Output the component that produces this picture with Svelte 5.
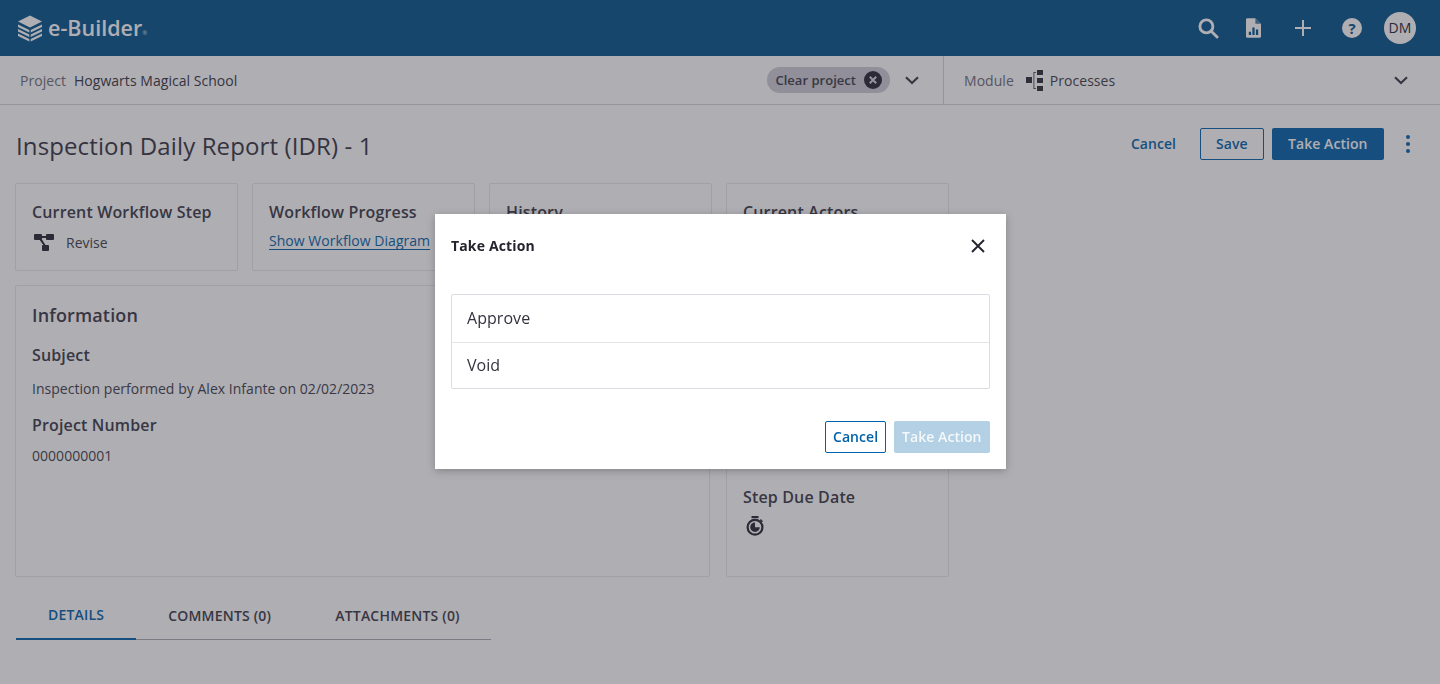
<script lang="ts">
  const cards = [
    { title: 'Current Workflow Step' },
    { title: 'Workflow Progress' },
    { title: 'History' },
    { title: 'Current Actors' },
  ];
  const tabs = ['DETAILS', 'COMMENTS (0)', 'ATTACHMENTS (0)'];
  const actions = ['Approve', 'Void'];
</script>

<div class="page">
  <header class="topbar">
    <div class="brand">
      <svg class="brand-mark" viewBox="0 0 26 27" fill="currentColor" aria-hidden="true">
        <path d="M13 0.5 25 6.5 13 12.5 1 6.5Z" />
        <path d="M1 9.5 12.3 15V17.6L1 12.1ZM25 9.5 13.7 15V17.6L25 12.1Z" />
        <path d="M1 14 12.3 19.5V22.1L1 16.6ZM25 14 13.7 19.5V22.1L25 16.6Z" />
        <path d="M1 18.5 12.3 24V26.6L1 21.1ZM25 18.5 13.7 24V26.6L25 21.1Z" />
      </svg>
      <span class="brand-name">e-Builder</span><span class="brand-reg">®</span>
    </div>
    <nav class="top-icons">
      <svg class="ic-search" viewBox="0 0 22 22" fill="none" stroke="currentColor" stroke-width="3" aria-hidden="true">
        <circle cx="8.8" cy="8.8" r="6.8" />
        <path d="M13.6 13.6 20 20" stroke-linecap="round" />
      </svg>
      <svg class="ic-report" viewBox="0 0 16 21" aria-hidden="true">
        <path d="M1.5 0H10L16 6V19.5A1.5 1.5 0 0 1 14.5 21H1.5A1.5 1.5 0 0 1 0 19.5V1.5A1.5 1.5 0 0 1 1.5 0Z" fill="currentColor" />
        <path d="M10 0V6H16" fill="#005289" fill-opacity="0.75" />
        <path d="M3 14.5H5.4V18H3ZM6.8 10H9.2V18H6.8ZM10.6 12H13V18H10.6Z" fill="#005289" />
      </svg>
      <svg class="ic-plus" viewBox="0 0 16 16" fill="none" stroke="currentColor" stroke-width="2" aria-hidden="true">
        <path d="M8 0V16M0 8H16" />
      </svg>
      <span class="ic-help">?</span>
      <span class="avatar">DM</span>
    </nav>
  </header>

  <div class="context">
    <div class="ctx-project">
      <span class="ctx-label">Project</span>
      <span class="ctx-value">Hogwarts Magical School</span>
      <span class="chip">
        Clear project
        <svg viewBox="0 0 18 18" aria-hidden="true">
          <circle cx="9" cy="9" r="9" fill="#24242f" />
          <path d="M5.8 5.8 12.2 12.2M12.2 5.8 5.8 12.2" stroke="#d4d4dd" stroke-width="2" />
        </svg>
      </span>
      <svg class="chevron" viewBox="0 0 14 9" fill="none" stroke="currentColor" stroke-width="2.2" aria-hidden="true">
        <path d="M1 1.2 7 7 13 1.2" />
      </svg>
    </div>
    <div class="ctx-module">
      <span class="ctx-label">Module</span>
      <svg class="ic-module" viewBox="0 0 17 21" fill="currentColor" aria-hidden="true">
        <rect x="0" y="7" width="6" height="6" />
        <rect x="11" y="0" width="6" height="5" />
        <rect x="11" y="8" width="6" height="5" />
        <rect x="11" y="16" width="6" height="5" />
        <path d="M10 2H7.5V19H10V18.2H8.3V2.8H10Z" />
      </svg>
      <span class="ctx-process">Processes</span>
      <svg class="chevron end" viewBox="0 0 14 9" fill="none" stroke="currentColor" stroke-width="2.2" aria-hidden="true">
        <path d="M1 1.2 7 7 13 1.2" />
      </svg>
    </div>
  </div>

  <main class="content">
    <div class="title-row">
      <h1>Inspection Daily Report (IDR) - 1</h1>
      <div class="title-actions">
        <button class="btn link">Cancel</button>
        <button class="btn outline save">Save</button>
        <button class="btn primary">Take Action</button>
        <svg class="kebab" viewBox="0 0 4 18" fill="currentColor" aria-hidden="true">
          <circle cx="2" cy="2" r="2" />
          <circle cx="2" cy="9" r="2" />
          <circle cx="2" cy="16" r="2" />
        </svg>
      </div>
    </div>

    <div class="cards">
      {#each cards as card, i}
        <section class="card small">
          <h2>{card.title}</h2>
          {#if i === 0}
            <div class="step">
              <svg viewBox="0 0 20 17" fill="currentColor" aria-hidden="true">
                <rect x="0" y="0" width="8" height="6" rx="1" />
                <rect x="12" y="0" width="8" height="6" rx="1" />
                <rect x="8" y="11" width="7" height="6" rx="1" />
                <path d="M7 2H13V4H7ZM5 5 10 12 11.5 11 7 4Z" />
              </svg>
              <span>Revise</span>
            </div>
          {:else if i === 1}
            <a class="diagram" href="#diagram">Show Workflow Diagram</a>
          {/if}
        </section>
      {/each}
    </div>

    <div class="details">
      <section class="card info">
        <h2 class="info-title">Information</h2>
        <h3>Subject</h3>
        <p>Inspection performed by Alex Infante on 02/02/2023</p>
        <h3>Project Number</h3>
        <p class="number">0000000001</p>
      </section>
      <section class="card side">
        <h3>Step Due Date</h3>
        <svg class="timer" viewBox="0 0 18 20" aria-hidden="true">
          <path d="M5.5 0H12.5V2.2H5.5Z" fill="#24242f" />
          <circle cx="9" cy="11.2" r="7.4" fill="none" stroke="#24242f" stroke-width="2.2" />
          <path d="M9 6.4A4.8 4.8 0 1 0 13.8 11.2H9Z" fill="#24242f" />
          <path d="M14.3 3.6 16.4 5.7" stroke="#24242f" stroke-width="1.6" />
        </svg>
      </section>
    </div>

    <div class="tabs">
      {#each tabs as tab, i}
        <button class="tab" class:active={i === 0}>{tab}</button>
      {/each}
    </div>
  </main>
</div>

<div class="overlay"></div>

<div class="modal" role="dialog" aria-label="Take Action">
  <div class="modal-head">
    <strong>Take Action</strong>
    <svg viewBox="0 0 14 14" fill="none" stroke="currentColor" stroke-width="1.9" aria-hidden="true">
      <path d="M1 1 13 13M13 1 1 13" />
    </svg>
  </div>
  <ul class="action-list">
    {#each actions as action}
      <li>{action}</li>
    {/each}
  </ul>
  <div class="modal-foot">
    <button class="btn outline modal-cancel">Cancel</button>
    <button class="btn disabled" disabled>Take Action</button>
  </div>
</div>

<style>
  :global(body) {
    margin: 0;
    background: #fff;
    font-family: 'Open Sans', 'Liberation Sans', sans-serif;
    color: #2a2a35;
  }

  .page {
    height: 684px;
    overflow: hidden;
  }

  .topbar {
    height: 56px;
    background: #005289;
    color: #fff;
    display: flex;
    align-items: center;
    justify-content: space-between;
    padding: 0 24px 0 17px;
  }

  .brand {
    display: flex;
    align-items: center;
    color: #fff;
  }

  .brand-mark {
    width: 26px;
    height: 27px;
    margin-right: 5px;
  }

  .brand-name {
    font-size: 21.5px;
    font-weight: 600;
    line-height: 1;
  }

  .brand-reg {
    font-size: 6px;
    align-self: flex-end;
    margin: 0 0 5px 0;
    opacity: 0.8;
  }

  .top-icons {
    display: flex;
    align-items: center;
  }

  .ic-search {
    width: 21px;
    height: 21px;
    margin-right: 27px;
  }

  .ic-report {
    width: 15px;
    height: 20px;
    margin-right: 34px;
  }

  .ic-plus {
    width: 16px;
    height: 16px;
    margin-right: 31px;
  }

  .ic-help {
    width: 20px;
    height: 20px;
    border-radius: 50%;
    background: #fff;
    color: #005289;
    font-size: 15px;
    font-weight: 700;
    line-height: 20px;
    text-align: center;
    margin-right: 22px;
  }

  .avatar {
    width: 32px;
    height: 32px;
    border-radius: 50%;
    background: #fff;
    color: #24242f;
    font-size: 14px;
    letter-spacing: 0.2px;
    line-height: 31px;
    text-align: center;
  }

  .context {
    height: 49px;
    box-sizing: border-box;
    display: flex;
    border-bottom: 1px solid #d5d5db;
    font-size: 14px;
    letter-spacing: 0.04px;
  }

  .ctx-project {
    width: 944px;
    box-sizing: border-box;
    display: flex;
    align-items: center;
    padding: 0 24px 0 20px;
    border-right: 1px solid #d5d5db;
  }

  .ctx-module {
    flex: 1;
    display: flex;
    align-items: center;
    padding: 0 32px 0 20px;
  }

  .ctx-label {
    color: #6c6c78;
    margin-right: 8px;
  }

  .ctx-value {
    color: #33333e;
  }

  .chip {
    margin-left: auto;
    height: 26px;
    border-radius: 13px;
    background: #cbcbd6;
    display: flex;
    align-items: center;
    gap: 8px;
    padding: 0 8px;
    font-size: 13px;
    font-weight: 600;
    letter-spacing: 0.03px;
    color: #3a3a45;
  }

  .chip svg {
    width: 18px;
    height: 18px;
  }

  .chevron {
    width: 14px;
    height: 9px;
    margin-left: 15px;
    color: #3a3a47;
  }

  .chevron.end {
    margin-left: auto;
  }

  .ic-module {
    width: 17px;
    height: 21px;
    margin: 0 7px 0 4px;
    color: #2a2a35;
  }

  .ctx-process {
    color: #3c3c48;
  }

  .content {
    padding: 0 15px;
  }

  .title-row {
    height: 78px;
    display: flex;
    align-items: center;
    justify-content: space-between;
  }

  h1 {
    margin: 2px 0 0 1px;
    font-size: 24px;
    font-weight: 400;
    letter-spacing: 0.12px;
    color: #33333e;
  }

  .title-actions {
    display: flex;
    align-items: center;
    gap: 8px;
    padding-right: 15px;
  }

  .btn {
    font: 600 14px 'Open Sans', 'Liberation Sans', sans-serif;
    letter-spacing: 0.05px;
    height: 32px;
    box-sizing: border-box;
    border-radius: 2px;
    border: 1px solid transparent;
    background: none;
    padding: 0 15px 2px;
    cursor: pointer;
  }

  .btn.link {
    color: #0062a8;
  }

  .btn.outline {
    border-color: #0062a8;
    background: #fff;
    color: #0062a8;
  }

  .btn.primary {
    background: #0062a8;
    color: #fff;
    padding: 0 15.5px 2px;
  }

  .kebab {
    width: 4px;
    height: 18px;
    margin-left: 14px;
    color: #0062a8;
  }

  .cards {
    display: flex;
    gap: 14px;
  }

  .card {
    box-sizing: border-box;
    border: 1px solid #e8e8ec;
    border-radius: 2px;
    background: #fff;
    padding: 0 16px;
  }

  .card.small {
    width: 223px;
    height: 88px;
    padding-top: 17px;
  }

  h2 {
    margin: 0;
    font-size: 16px;
    line-height: 22px;
    font-weight: 600;
    letter-spacing: 0.15px;
    color: #383843;
  }

  .step {
    display: flex;
    align-items: center;
    gap: 12px;
    margin: 10px 0 0 2px;
    font-size: 14px;
    color: #3c3c48;
  }

  .step svg {
    width: 20px;
    height: 17px;
    color: #24242f;
  }

  .diagram {
    display: block;
    margin-top: 8px;
    font-size: 14px;
    letter-spacing: 0.04px;
    color: #0062a8;
    line-height: 20px;
    text-underline-offset: 3px;
  }

  .details {
    display: flex;
    gap: 16px;
    margin-top: 14px;
  }

  .info {
    width: 695px;
    height: 292px;
    padding-top: 16px;
  }

  .info-title {
    font-size: 18px;
    line-height: 26px;
  }

  h3 {
    margin: 16px 0 0;
    font-size: 16px;
    line-height: 22px;
    font-weight: 600;
    letter-spacing: 0.15px;
    color: #383843;
  }

  .info p {
    margin: 13px 0 0;
    font-size: 14px;
    letter-spacing: 0.03px;
    line-height: 20px;
    color: #3c3c48;
  }

  .info p + h3 {
    margin-top: 15px;
  }

  .info p.number {
    margin-top: 10px;
  }

  .side {
    width: 223px;
    height: 292px;
    padding-top: 200px;
  }

  .side h3 {
    margin: 0;
  }

  .timer {
    display: block;
    width: 18px;
    height: 20px;
    margin: 8px 0 0 3px;
  }

  .tabs {
    display: flex;
    width: 475px;
    margin: 23px 0 0 1px;
    border-bottom: 1px solid #a9a9b3;
  }

  .tab {
    flex: none;
    white-space: nowrap;
    height: 40px;
    border: 0;
    background: none;
    padding: 0 32px 8px;
    margin-bottom: -1px;
    border-bottom: 2px solid transparent;
    font: 600 14px 'Open Sans', 'Liberation Sans', sans-serif;
    letter-spacing: 0.2px;
    color: #383843;
  }

  .tab.active {
    color: #0062a8;
    border-bottom-color: #0062a8;
    padding-bottom: 10px;
  }

  .overlay {
    position: fixed;
    inset: 0;
    background: rgba(55, 52, 65, 0.4);
  }

  .modal {
    position: fixed;
    left: 435px;
    top: 214px;
    width: 571px;
    height: 255px;
    box-sizing: border-box;
    padding: 0 16px;
    background: #fff;
    box-shadow: 0 2px 8px rgba(0, 0, 0, 0.25);
  }

  .modal-head {
    height: 62px;
    display: flex;
    align-items: center;
    justify-content: space-between;
    font-size: 14px;
    letter-spacing: 0.15px;
    color: #24242f;
  }

  .modal-head svg {
    width: 14px;
    height: 14px;
    margin: 2px 5px 0 0;
  }

  .action-list {
    list-style: none;
    margin: 18px 0 0;
    padding: 0;
    border: 1px solid #dcdce2;
    border-radius: 2px;
  }

  .action-list li {
    height: 47px;
    line-height: 47px;
    padding: 0 15px;
    font-size: 16px;
    letter-spacing: 0.05px;
    color: #33333e;
  }

  .action-list li + li {
    height: 45px;
    line-height: 45px;
    border-top: 1px solid #e4e4e9;
  }

  .modal-foot {
    display: flex;
    justify-content: flex-end;
    gap: 8px;
    margin-top: 32px;
  }

  .btn.modal-cancel {
    padding: 0 6.5px 2px;
  }

  .btn.disabled {
    background: #b3d0e4;
    color: #f4f8fb;
    padding: 0 7.5px 2px;
    cursor: default;
  }
</style>
